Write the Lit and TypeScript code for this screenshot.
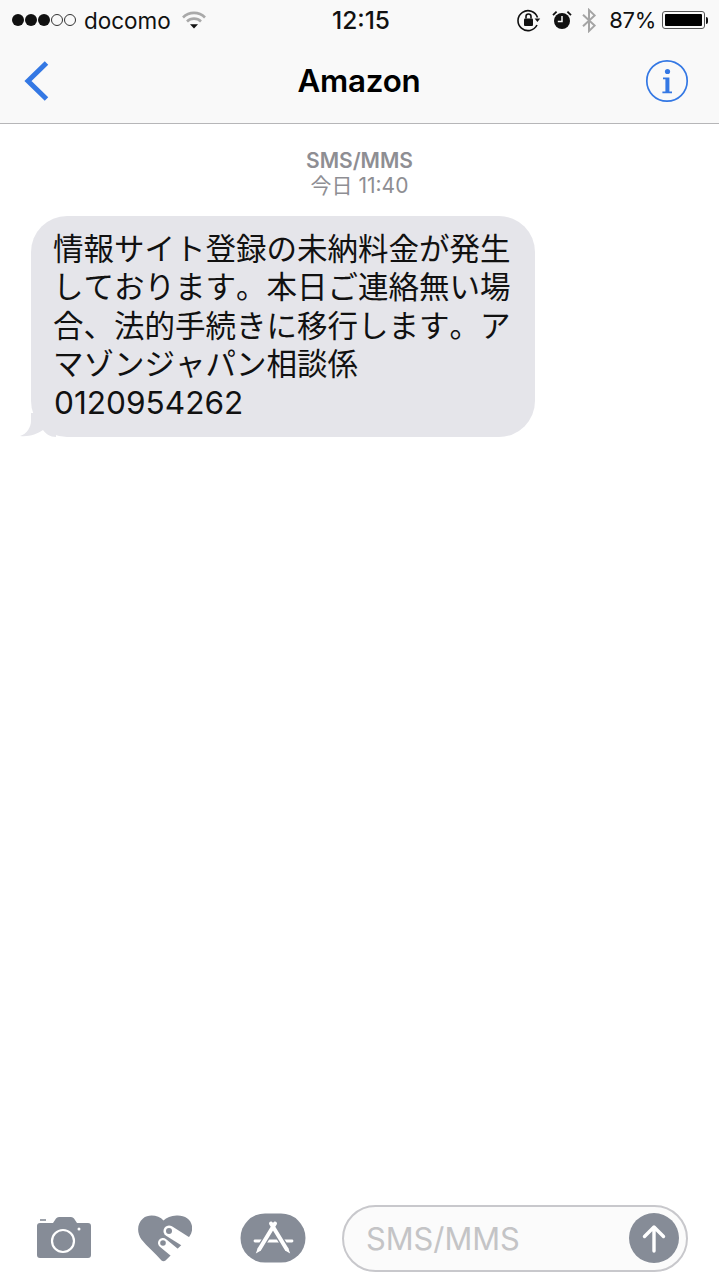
import { css, html, LitElement, svg } from "lit";
import { customElement } from "lit/decorators.js";

const wifi = svg`<svg class="wifi" width="24" height="18" viewBox="0 0 24 18">
	<path d="M1 6.500a15.500 15.500 0 0 1 22 0" fill="none" stroke="#a9a9a9" stroke-width="2.600"/>
	<path d="M5 10.500a10 10 0 0 1 14 0" fill="none" stroke="#a9a9a9" stroke-width="2.600"/>
	<path d="M8 13.200h8L12 17.500z" fill="#111"/>
</svg>`;

const rotationLock = svg`<svg width="24" height="24" viewBox="0 0 24 24">
	<path d="M20.500 9.500A10 10 0 1 0 20 17" fill="none" stroke="#111" stroke-width="1.600"/>
	<path d="M17.600 10.500h5.600L20.400 14z" fill="#111"/>
	<rect x="7" y="10.500" width="9" height="7.500" rx="1" fill="#111"/>
	<path d="M9 10.500V8.500a2.500 2.500 0 0 1 5 0v2" fill="none" stroke="#111" stroke-width="1.600"/>
</svg>`;

const alarm = svg`<svg width="20" height="20" viewBox="0 0 20 20">
	<circle cx="10" cy="11" r="8" fill="#111"/>
	<path d="M10 6v5.500H5.800" fill="none" stroke="#fafafa" stroke-width="1.500"/>
	<path d="M1 5.200 4.600 1.600M19 5.200l-3.600-3.600" stroke="#111" stroke-width="1.800"/>
</svg>`;

const bluetooth = svg`<svg width="16" height="25" viewBox="0 0 16 25">
	<path d="M2 6.800 13.600 17.600 8 23V2l5.600 5.400L2 18.200" fill="none" stroke="#a5a5a5" stroke-width="2"/>
</svg>`;

const infoIcon = svg`<svg width="44" height="44" viewBox="0 0 44 44">
	<circle cx="22" cy="22" r="20.200" fill="none" stroke="#3478e4" stroke-width="1.700"/>
	<circle cx="22.500" cy="12.500" r="2.600" fill="#3478e4"/>
	<path d="M18 18.400h6.400v14h2.600v1.800H17.400v-1.800h3V20.200h-2.400z" fill="#3478e4"/>
</svg>`;

const backIcon = svg`<svg width="28" height="42" viewBox="0 0 28 42">
	<path d="M24.500 3 6 21l18.500 18" fill="none" stroke="#3478e4" stroke-width="5"/>
</svg>`;

const cameraIcon = svg`<svg width="56" height="44" viewBox="0 0 56 44">
	<path d="M4 7h13l3-4.500Q21 1 23 1h12q2 0 3 1.500L41 7h11q3 0 3 3v29q0 3-3 3H4q-3 0-3-3V10q0-3 3-3z" fill="#868c97"/>
	<path d="M4 4h6" stroke="#868c97" stroke-width="1.600"/>
	<circle cx="27" cy="25" r="11" fill="none" stroke="#fff" stroke-width="2.200"/>
	<circle cx="43" cy="13" r="1.500" fill="#fff"/>
</svg>`;

const heartIcon = svg`<svg width="54" height="47" viewBox="0 0 54 47">
	<path d="M25.500 5.500C21 .5 11-1.500 5 3.500-1.500 9-1 18 3.500 24.500 9 31.500 17 38 23.500 45.500q2 1.500 4 0L47 26.500c5-5 8-9.500 7-15.500C53 4 46 0 38.500.5 33 .8 28.500 2.500 25.500 5.500z" fill="#868c97"/>
	<path d="M31 16 58 33" stroke="#fff" stroke-width="11" stroke-linecap="round"/>
	<path d="M25 28 47 46" stroke="#fff" stroke-width="10" stroke-linecap="round"/>
	<circle cx="31" cy="16" r="3" fill="#868c97"/>
	<circle cx="25" cy="28" r="2.800" fill="#868c97"/>
</svg>`;

const appsIcon = svg`<svg width="66" height="50" viewBox="0 0 66 50">
	<rect x="0.500" y="0.500" width="65" height="49" rx="24.500" fill="#868c97"/>
	<path d="M15 28h37" stroke="#fff" stroke-width="2.800" stroke-linecap="round"/>
	<path d="M35 10.500 19.500 36M31 10.500 46.500 36" stroke="#868c97" stroke-width="6.500" fill="none"/>
	<path d="M35 10.500 19.500 36M31 10.500 46.500 36" stroke="#fff" stroke-width="4" fill="none" stroke-linecap="round"/>
	<path d="M18 34.500 15.800 40.500 21 37.500M48 34.500 50.200 40.500 45 37.500" fill="#fff"/>
</svg>`;

const sendIcon = svg`<svg width="50" height="50" viewBox="0 0 50 50">
	<circle cx="25" cy="25" r="25" fill="#868c97"/>
	<path d="M25 38V14M15.500 23.500 25 14l9.500 9.500" fill="none" stroke="#fff" stroke-width="3.400" stroke-linecap="round" stroke-linejoin="round"/>
</svg>`;

@customElement("app-root")
export class AppRoot extends LitElement {
	static override styles = css`
		:host {
			display: flex;
			flex-direction: column;
			height: 1280px;
			background: #fff;
			color: #000;
			font-family: Inter, "Noto Sans CJK JP", sans-serif;
		}

		.top {
			background: #f9f9f9;
			border-bottom: 1px solid #b6b6b8;
			height: 124px;
			box-sizing: border-box;
		}

		.status {
			display: grid;
			grid-template-columns: 1fr auto 1fr;
			align-items: center;
			height: 40px;
			padding: 0 11px 0 12px;
			font-size: 22.500px;
			color: #111;
		}
		.status-left, .status-right {
			display: flex;
			align-items: center;
		}
		.status-right {
			justify-content: flex-end;
		}
		.dots {
			display: flex;
			gap: 1px;
			margin-right: 8px;
		}
		.dot {
			width: 12px;
			height: 12px;
			border-radius: 50%;
			box-sizing: border-box;
			background: #111;
		}
		.dot.off {
			background: none;
			border: 1px solid #333;
		}
		.wifi {
			margin-left: 11px;
		}
		.time {
			font-weight: 500;
			font-size: 24.500px;
			margin-left: 2px;
		}
		.status-right svg:nth-child(2) {
			margin-left: 11px;
		}
		.status-right svg:nth-child(3) {
			margin-left: 9px;
		}
		.pct {
			margin-left: 12px;
			font-size: 22px;
			letter-spacing: -0.3px;
		}
		.battery {
			display: flex;
			align-items: center;
			margin-left: 6px;
		}
		.battery-body {
			width: 43px;
			height: 18px;
			box-sizing: border-box;
			border: 1px solid #555;
			border-radius: 3px;
			padding: 2px;
		}
		.battery-fill {
			height: 100%;
			background: #000;
			border-radius: 1px;
		}
		.battery-cap {
			width: 2px;
			height: 7px;
			background: #111;
			border-radius: 0 2px 2px 0;
			margin-left: 1px;
		}

		.nav {
			display: grid;
			grid-template-columns: 1fr auto 1fr;
			align-items: center;
			height: 82px;
			padding: 0 23px 2px 22px;
		}
		.nav-title {
			font-size: 31.300px;
			font-weight: 600;
			letter-spacing: -0.2px;
		}
		.nav-right {
			display: flex;
			justify-content: flex-end;
			padding-right: 7px;
		}
		.nav svg {
			display: block;
		}

		.thread {
			flex: 1;
			padding-top: 24px;
		}
		.stamp {
			text-align: center;
			color: #8e8e93;
			font-size: 21px;
			line-height: 25px;
		}
		.stamp b {
			font-weight: 600;
		}

		.bubble {
			position: relative;
			box-sizing: border-box;
			width: 504px;
			height: 221px;
			margin: 18px 0 0 31px;
			padding: 12px 22px 0;
			background: #e5e5ea;
			border-radius: 36px;
			font-family: "Noto Sans CJK JP", sans-serif;
			font-size: 30.500px;
			line-height: 38.400px;
			font-kerning: none;
			font-feature-settings: "palt" 0, "kern" 0;
			text-spacing-trim: space-all;
			white-space: nowrap;
			color: #111;
		}
		.tail {
			position: absolute;
			left: -11px;
			bottom: 0;
			display: block;
		}
		.num {
			font-family: Inter, sans-serif;
			font-size: 31.600px;
			margin-left: 1px;
		}

		.composer {
			display: flex;
			align-items: center;
			height: 70px;
			margin-bottom: 7px;
			padding: 0 31px 0 36px;
		}
		.composer svg {
			display: block;
			flex: none;
		}
		.heart {
			margin-left: 46px;
		}
		.apps {
			margin-left: 48px;
		}
		.field {
			flex: 1;
			display: flex;
			align-items: center;
			justify-content: space-between;
			box-sizing: border-box;
			height: 67px;
			margin-left: 36px;
			padding: 0 7px 0 22px;
			background: #fbfbfb;
			border: 2px solid #c8c8cc;
			border-radius: 34px;
			color: #c4c4c6;
			font-size: 30.800px;
		}
	`;

	override render() {
		return html`
			<div class="top">
				<div class="status">
					<div class="status-left">
						<div class="dots">
							<span class="dot"></span><span class="dot"></span><span class="dot"></span>
							<span class="dot off"></span><span class="dot off"></span>
						</div>
						<span>docomo</span>
						${wifi}
					</div>
					<div class="time">12:15</div>
					<div class="status-right">
						${rotationLock}${alarm}${bluetooth}
						<span class="pct">87%</span>
						<div class="battery">
							<div class="battery-body"><div class="battery-fill"></div></div>
							<div class="battery-cap"></div>
						</div>
					</div>
				</div>
				<div class="nav">
					<div>${backIcon}</div>
					<div class="nav-title">Amazon</div>
					<div class="nav-right">${infoIcon}</div>
				</div>
			</div>
			<div class="thread">
				<div class="stamp"><b>SMS/MMS</b><br />今日 11:40</div>
				<div class="bubble">
					<svg class="tail" width="36" height="24" viewBox="0 0 36 24">
						<path d="M11 0V8C11 14 7 21 0 23 9 24 17 21 23 17 26 21 30 24 36 24V0z" fill="#e5e5ea"/>
					</svg>
					情報サイト登録の未納料金が発生<br />
					しております。本日ご連絡無い場<br />
					合、法的手続きに移行します。ア<br />
					マゾンジャパン相談係<br />
					<span class="num">0120954262</span>
				</div>
			</div>
			<div class="composer">
				${cameraIcon}
				<span class="heart">${heartIcon}</span>
				<span class="apps">${appsIcon}</span>
				<div class="field">
					<span>SMS/MMS</span>
					${sendIcon}
				</div>
			</div>
		`;
	}
}
